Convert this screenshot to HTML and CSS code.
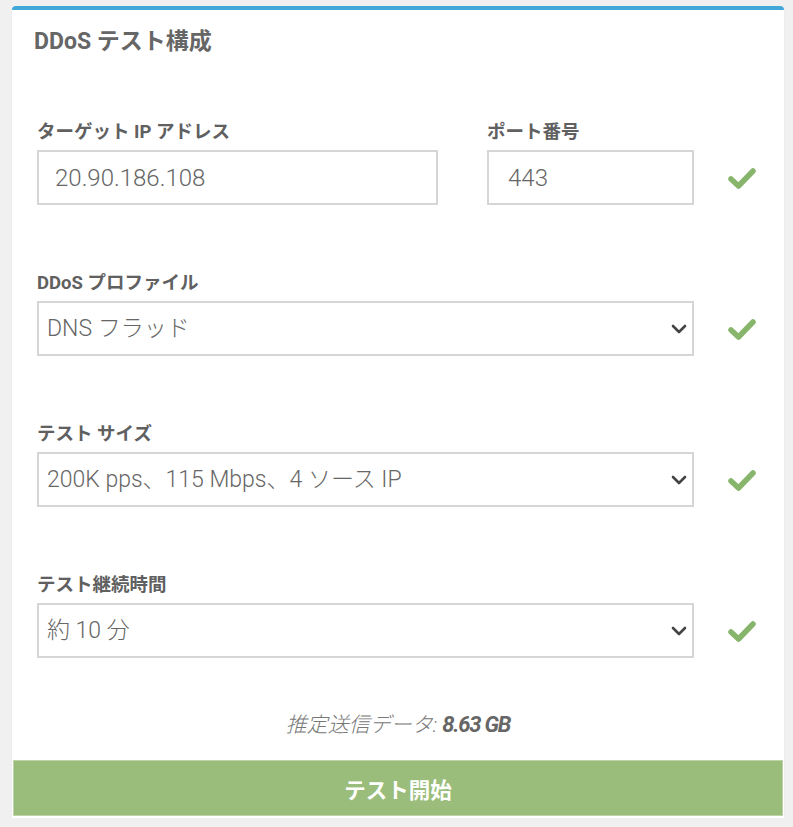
FILE: index.html
```html
<!DOCTYPE html>
<html lang="ja">
<head>
<meta charset="utf-8">
<title>DDoS テスト構成</title>
<link rel="stylesheet" href="styles.css">
</head>
<body>
<div class="card">
  <h1 class="title">DDoS テスト構成</h1>
  <form class="form">
    <div class="row">
      <div class="field field-ip">
        <label class="label">ターゲット IP アドレス</label>
        <input class="control input-ip" type="text" value="20.90.186.108">
      </div>
      <div class="field field-port">
        <label class="label">ポート番号</label>
        <input class="control input-port" type="text" value="443">
      </div>
      <svg class="check" viewBox="0 0 28 24" width="28" height="24"><path d="M3 13 L10.5 20 L25 5" fill="none" stroke="#88b56c" stroke-width="5.5" stroke-linecap="round" stroke-linejoin="round"/></svg>
    </div>

    <div class="row">
      <div class="field field-wide">
        <label class="label">DDoS プロファイル</label>
        <div class="select-wrap">
          <select class="control select"><option>DNS フラッド</option></select>
          <svg class="chevron" viewBox="0 0 16 10" width="16" height="10"><path d="M2 2 L8 8 L14 2" fill="none" stroke="#444" stroke-width="2.6" stroke-linecap="round" stroke-linejoin="round"/></svg>
        </div>
      </div>
      <svg class="check" viewBox="0 0 28 24" width="28" height="24"><path d="M3 13 L10.5 20 L25 5" fill="none" stroke="#88b56c" stroke-width="5.5" stroke-linecap="round" stroke-linejoin="round"/></svg>
    </div>

    <div class="row">
      <div class="field field-wide">
        <label class="label">テスト サイズ</label>
        <div class="select-wrap">
          <select class="control select"><option>200K pps、115 Mbps、4 ソース IP</option></select>
          <svg class="chevron" viewBox="0 0 16 10" width="16" height="10"><path d="M2 2 L8 8 L14 2" fill="none" stroke="#444" stroke-width="2.6" stroke-linecap="round" stroke-linejoin="round"/></svg>
        </div>
      </div>
      <svg class="check" viewBox="0 0 28 24" width="28" height="24"><path d="M3 13 L10.5 20 L25 5" fill="none" stroke="#88b56c" stroke-width="5.5" stroke-linecap="round" stroke-linejoin="round"/></svg>
    </div>

    <div class="row">
      <div class="field field-wide">
        <label class="label">テスト継続時間</label>
        <div class="select-wrap">
          <select class="control select"><option>約 10 分</option></select>
          <svg class="chevron" viewBox="0 0 16 10" width="16" height="10"><path d="M2 2 L8 8 L14 2" fill="none" stroke="#444" stroke-width="2.6" stroke-linecap="round" stroke-linejoin="round"/></svg>
        </div>
      </div>
      <svg class="check" viewBox="0 0 28 24" width="28" height="24"><path d="M3 13 L10.5 20 L25 5" fill="none" stroke="#88b56c" stroke-width="5.5" stroke-linecap="round" stroke-linejoin="round"/></svg>
    </div>
  </form>
  <p class="estimate">推定送信データ: <strong class="estimate-value">8.63 GB</strong></p>
  <button class="start" type="button">テスト開始</button>
</div>
</body>
</html>
```

FILE: styles.css
```css
* { box-sizing: border-box; }

html, body {
  margin: 0;
  padding: 0;
  background: #f0f0f0;
  font-family: Roboto, "Noto Sans CJK JP", sans-serif;
}

.card {
  width: 772px;
  margin: 6px 0 0 12px;
  background: #fff;
  border-top: 4px solid #42a8d9;
  border-radius: 4px 4px 0 0;
  padding-bottom: 2px;
  box-shadow: 0 1px 2px rgba(0,0,0,0.06);
}

.title {
  margin: 0;
  padding: 17px 22px 0;
  font-size: 23px;
  line-height: 30px;
  font-weight: 700;
  color: #666;
}

.form {
  padding: 63px 0 0 25px;
}

.row {
  display: flex;
  align-items: flex-end;
  margin-bottom: 66px;
}

.row:last-child {
  margin-bottom: 0;
}

.field {
  display: flex;
  flex-direction: column;
}

.field-ip { width: 401px; }
.field-port { width: 207px; margin-left: 49px; }
.field-wide { width: 657px; }

.label {
  font-size: 18.5px;
  line-height: 24px;
  font-weight: 700;
  color: #606060;
  margin-bottom: 6px;
}

.control {
  height: 55px;
  border: 2px solid #d6d6d6;
  background: #fff;
  font-family: Roboto, "Noto Sans CJK JP", sans-serif;
  font-size: 23px;
  font-weight: 300;
  color: #666;
  outline: none;
  border-radius: 0;
}

.input-ip, .input-port {
  font-size: 24px;
  padding: 0 0 0 16px;
  width: 100%;
}

.input-port {
  padding-left: 19px;
}

.select-wrap {
  position: relative;
}

.select {
  width: 100%;
  appearance: none;
  -webkit-appearance: none;
  padding: 0 40px 0 8px;
}

.chevron {
  position: absolute;
  right: 7px;
  top: 23px;
}

.check {
  margin: 0 0 15px 34px;
  flex: none;
}

.estimate {
  margin: 55px 0 0;
  text-align: center;
  font-size: 21px;
  line-height: 24px;
  font-style: italic;
  font-weight: 300;
  color: #777;
}

.estimate-value {
  font-size: 22px;
  font-weight: 700;
  color: #666;
  letter-spacing: -1.2px;
}

.start {
  display: block;
  width: 770px;
  height: 56px;
  margin: 23px 1px 0;
  background: #9bbd7b;
  border: 1px solid #bcd4a8;
  color: #fff;
  font-family: Roboto, "Noto Sans CJK JP", sans-serif;
  font-size: 21.5px;
  font-weight: 700;
  cursor: pointer;
}
```
